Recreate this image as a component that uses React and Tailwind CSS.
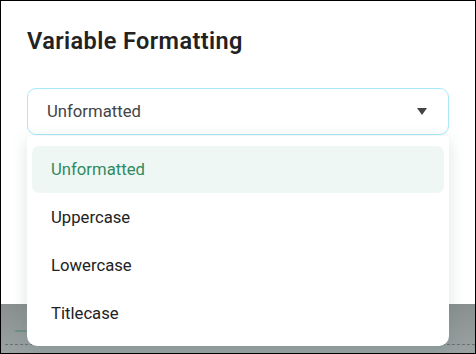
const options = ['Unformatted', 'Uppercase', 'Lowercase', 'Titlecase'];

export default function App() {
  const selected = 'Unformatted';

  return (
    <div
      className="w-[476px] h-[354px] border border-black overflow-hidden flex flex-col bg-white"
      style={{ fontFamily: 'Roboto, "Noto Sans", sans-serif' }}
    >
      <div className="h-[303px] bg-white px-[26px] pt-[25px] shrink-0">
        <h2 className="text-[23.5px] leading-[30px] font-semibold tracking-[0.4px] text-[#222]">Variable Formatting</h2>

        <div className="relative mt-[32px]">
          <div className="h-[47px] rounded-[9px] border border-[#a8e9fb] flex items-center justify-between pl-[19px] pr-[21px] text-[16.7px] text-[#444]">
            <span>{selected}</span>
            <span className="w-0 h-0 border-l-[5px] border-r-[5px] border-t-[7px] border-l-transparent border-r-transparent border-t-[#444]" />
          </div>

          <div className="absolute left-0 right-0 top-[48px] z-10 bg-white rounded-b-[10px] rounded-t-[4px] shadow-[0_4px_16px_rgba(60,110,110,0.18)] px-[5px] pt-[10px] pb-[9px] flex flex-col gap-[1px]">
            {options.map((opt) => (
              <div
                key={opt}
                className={
                  opt === selected
                    ? 'h-[47px] rounded-[7px] bg-[#eff7f4] text-[#2f8a5f] flex items-center pl-[19px] text-[16.7px]'
                    : 'h-[47px] rounded-[7px] text-[#222] flex items-center pl-[19px] text-[16.7px]'
                }
              >
                {opt}
              </div>
            ))}
          </div>
        </div>
      </div>

      <div className="flex-1 bg-gradient-to-b from-[#8a8f8f] to-[#9aa2a2] flex flex-col justify-end pb-[8px] pl-[4px]">
        <div className="h-[2px] w-[12px] rounded-full bg-[#6d8c86] mb-[12px] ml-[10px]" />
        <div className="border-t border-dashed border-[#6a6f6f]" />
      </div>
    </div>
  );
}
